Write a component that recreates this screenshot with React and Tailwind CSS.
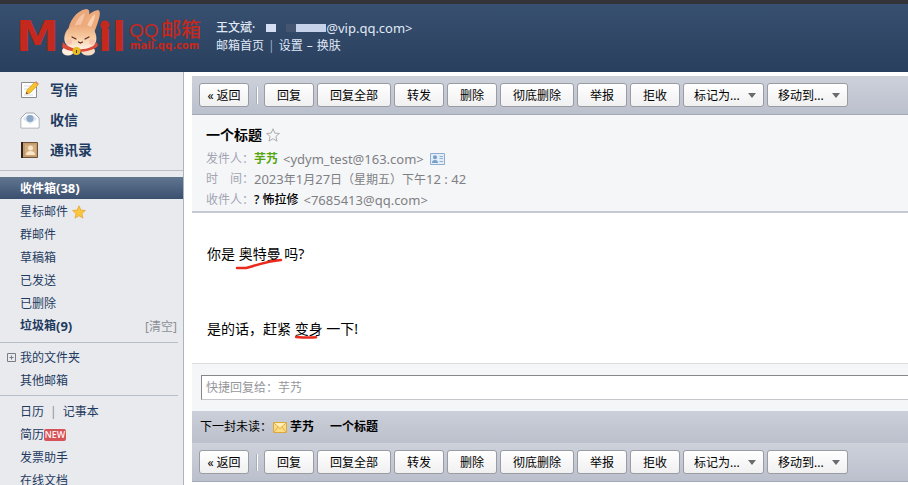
import React from "react";

const buttonBase =
  "h-6 shrink-0 rounded-[3px] border border-[#9a9ca3] bg-linear-to-b from-white to-[#f0f0f1] text-xs text-black";

function ToolButton({ children, wide }) {
  return (
    <button type="button" className={`${buttonBase} pt-[2px] ${wide ? "w-[74px]" : "w-[50px]"}`}>
      {children}
    </button>
  );
}

function ToolSelect({ label }) {
  return (
    <div className="relative flex shrink-0">
      <select aria-label={label} className={`${buttonBase} w-[81px] appearance-none pl-[10px] pt-px`}>
        <option>{label}</option>
      </select>
      <svg viewBox="0 0 8 5" className="pointer-events-none absolute right-2 top-[10px] h-[5px] w-2" aria-hidden="true">
        <path d="M0 0h8L4 5z" fill="#6b6b6e" />
      </svg>
    </div>
  );
}

function Toolbar() {
  return (
    <div
      role="toolbar"
      className="flex h-[39px] shrink-0 items-center gap-[3px] overflow-hidden border-b border-[#a3a8b6] bg-linear-to-b from-[#cdd1da] to-[#bbc0cd] pl-[7px]"
    >
      <ToolButton>« 返回</ToolButton>
      <span className="ml-1 mr-[3px] h-[17px] w-[2px] border-l border-[#a9aebb] bg-white" />
      <ToolButton>回复</ToolButton>
      <ToolButton wide>回复全部</ToolButton>
      <ToolButton>转发</ToolButton>
      <ToolButton>删除</ToolButton>
      <ToolButton wide>彻底删除</ToolButton>
      <ToolButton>举报</ToolButton>
      <ToolButton>拒收</ToolButton>
      <ToolSelect label="标记为..." />
      <ToolSelect label="移动到..." />
    </div>
  );
}

function Logo() {
  return (
    <svg viewBox="0 0 190 56" className="h-14 w-[190px] shrink-0" role="img" aria-label="QQ邮箱">
      <defs>
        <linearGradient id="fur" x1="0" y1="0" x2="0" y2="1">
          <stop offset="0" stopColor="#eba878" />
          <stop offset="0.5" stopColor="#f7c9a0" />
          <stop offset="1" stopColor="#fff3e4" />
        </linearGradient>
      </defs>
      <g fill="#c5281c" fontWeight="700">
        <text x="-2" y="47" fontSize="43" fontFamily="DejaVu Sans, sans-serif">M</text>
        <text x="80" y="47" fontSize="41" fontFamily="DejaVu Sans, sans-serif">ı</text>
        <circle cx="87" cy="21" r="4.500" />
        <text x="94" y="47" fontSize="41" fontFamily="DejaVu Sans, sans-serif">l</text>
        <text x="111" y="33" fontSize="19" fontWeight="500" fontFamily="Liberation Sans, sans-serif">QQ</text>
        <text x="143" y="33" fontSize="20" fontWeight="500" fontFamily="Noto Sans CJK SC, sans-serif">邮箱</text>
        <text x="112" y="45" fontSize="10" fontFamily="DejaVu Sans, sans-serif">mail.qq.com</text>
      </g>
      <path d="M50 28C51 17 58 7 68 5c5 0 4 6 0 13l-3 9z" fill="#e9a77a" />
      <path d="M56 24c2-7 6-13 11-15-1 6-4 10-5 15z" fill="#f4c4a4" />
      <path d="M62 27c2-10 8-19 18-21 4 1 1 10-4 23z" fill="#eeab7c" />
      <path d="M68 25c2-7 5-12 9-15 0 6-3 10-5 15z" fill="#f9d2b4" />
      <ellipse cx="50" cy="47" rx="6" ry="4.500" fill="#fff0e0" />
      <ellipse cx="70" cy="47" rx="7" ry="4.500" fill="#f9dcc4" />
      <path d="M45 38c6 8 26 9 34 0l1 4c-7 7-28 8-36 1z" fill="#dc4b3a" />
      <path d="M49 26c4-6 23-8 27 0 4 7 3 15-3 17-7 3-14 3-21 0-7-3-7-11-3-17z" fill="url(#fur)" />
      <path d="M54 33l4 2m9 0l4-2M60.500 38l2 1 2-1" stroke="#5a2b1c" strokeWidth="1.200" fill="none" strokeLinecap="round" />
      <circle cx="51" cy="38" r="3" fill="#f5b09a" opacity=".5" />
      <circle cx="74" cy="38" r="3" fill="#f5b09a" opacity=".5" />
      <circle cx="58.500" cy="47" r="4" fill="#e6bd20" />
      <path d="M58.500 46v3" stroke="#5a3b10" />
    </svg>
  );
}

function Header() {
  return (
    <header className="flex h-[72px] shrink-0 gap-2 border-t-4 border-[#333338] bg-linear-to-b from-[#385070] to-[#293f5e] pl-[18px] text-[#e0e9f6]">
      <Logo />
      <div className="pt-[15px] text-xs leading-[18px]">
        <div className="flex items-center">
          <b className="font-medium">王文斌·</b>
          <span className="ml-[11px] h-2 w-[10px] bg-[#d3def2]" />
          <span className="ml-[10px] h-2 w-[10px] bg-[#435571]" />
          <span className="h-2 w-[30px] bg-[#c6d2e9]" />
          <span className="text-[13px]">@vip.qq.com&gt;</span>
        </div>
        <nav>
          <a href="#home">邮箱首页</a>
          <span className="px-1 text-[#9dacc2]">|</span>
          <a href="#settings">设置</a>
          <span className="px-1">–</span>
          <a href="#skin">换肤</a>
        </nav>
      </div>
    </header>
  );
}

function WriteIcon() {
  return (
    <svg viewBox="0 0 20 20" className="size-5" aria-hidden="true">
      <path d="M1.500 2.500h15v15h-15z" fill="#fff" stroke="#8d8d8d" />
      <path d="M4 6h7M4 9h4M4 15h9" stroke="#dadada" />
      <path d="M6 14l1-4 8-8 3 3-8 8z" fill="#f6c32f" stroke="#d79b1c" strokeWidth=".7" />
      <path d="M15 2l1-1 3 3-1 1z" fill="#e2896f" />
      <path d="M6 14l.6-2 1.500 1.400z" fill="#4a3a20" />
    </svg>
  );
}

function InboxIcon() {
  return (
    <svg viewBox="0 0 20 20" className="size-5" aria-hidden="true">
      <path d="M1 8l5-5h8l5 5v10H1z" fill="#fbfcfd" stroke="#a3a8b0" />
      <path d="M3 9l4-4h6l4 4-7 5z" fill="#dbe4ee" />
      <circle cx="10" cy="8.500" r="3.500" fill="#8da8c6" />
      <path d="M1.500 9l8.500 6 8.500-6v8.500h-17z" fill="#fff" opacity=".85" />
    </svg>
  );
}

function ContactsIcon() {
  return (
    <svg viewBox="0 0 20 20" className="size-5" aria-hidden="true">
      <path d="M1.500 2.500h16v15h-16z" fill="#c19a6d" stroke="#6f5236" />
      <path d="M1 2h2v16H1z" fill="#33241a" />
      <path d="M5 4.500h11v11H5z" fill="#d3ae82" />
      <circle cx="10.500" cy="8" r="2.500" fill="#fbe6c8" />
      <path d="M6 15c0-3 2-4 4.500-4s4.500 1 4.500 4z" fill="#fbe6c8" />
    </svg>
  );
}

function StarIcon({ className, fill, stroke }) {
  return (
    <svg viewBox="0 0 14 14" className={className} aria-hidden="true">
      <path d="M7 .8l1.800 4.300 4.600.4-3.500 3 1.100 4.600L7 10.700l-4 2.400 1.100-4.600-3.500-3 4.600-.4z" fill={fill} stroke={stroke} strokeWidth=".9" />
    </svg>
  );
}

function Sidebar() {
  const row = "flex h-[23px] shrink-0 items-center pl-5";
  return (
    <aside className="flex w-[184px] shrink-0 flex-col overflow-hidden border-r border-[#a9b3c2] bg-[#e8eaee] text-xs text-[#1f3a5f]">
      <nav className="flex flex-col pt-[3px] text-sm font-bold">
        <a href="#compose" className="flex h-[30px] items-center gap-[10px] pl-5"><WriteIcon />写信</a>
        <a href="#receive" className="flex h-[30px] items-center gap-[10px] pl-5"><InboxIcon />收信</a>
        <a href="#contacts" className="flex h-[30px] items-center gap-[10px] pl-5"><ContactsIcon />通讯录</a>
      </nav>
      <nav className="mt-[5px] flex flex-col border-t border-[#b9bfca] pt-[6px]">
        <a href="#inbox" className="flex h-[22px] items-center bg-linear-to-b from-[#61768f] to-[#3b5070] pl-5 pt-px font-bold text-white">收件箱<span className="text-[13px]">(38)</span></a>
        <div className="flex flex-col pt-px">
          <a href="#starred" className={row}>星标邮件<StarIcon className="ml-1 size-[14px]" fill="#fbc83c" stroke="#e9a83c" /></a>
          <a href="#group" className={row}>群邮件</a>
          <a href="#drafts" className={row}>草稿箱</a>
          <a href="#sent" className={row}>已发送</a>
          <a href="#deleted" className={row}>已删除</a>
          <div className={`${row} justify-between pr-[6px]`}>
            <a href="#junk" className="flex items-center font-bold">垃圾箱<span className="text-[13px]">(9)</span></a>
            <a href="#empty" className="text-[#8c8f95]">[清空]</a>
          </div>
        </div>
      </nav>
      <nav className="mr-[5px] mt-1 flex flex-col border-t border-[#b9bfca] pt-[3px]">
        <a href="#folders" className="flex h-[23px] items-center gap-1 pl-[7px]">
          <svg viewBox="0 0 9 9" className="size-[9px]" aria-hidden="true">
            <path d="M.5.5h8v8h-8zM2.500 4.500h4M4.500 2.500v4" fill="none" stroke="#777d86" />
          </svg>
          我的文件夹
        </a>
        <a href="#others" className={row}>其他邮箱</a>
      </nav>
      <nav className="mr-[5px] mt-[3px] flex flex-col border-t border-[#b9bfca] pt-1">
        <div className={row}>
          <a href="#calendar">日历</a>
          <span className="px-[6px] text-[#8c8f95]">|</span>
          <a href="#notes">记事本</a>
        </div>
        <a href="#resume" className={row}>
          简历
          <span className="flex h-3 w-[22px] items-center justify-center rounded-[2px] bg-[#d65356] text-[9px] font-medium text-white">NEW</span>
        </a>
        <a href="#invoice" className={row}>发票助手</a>
        <a href="#docs" className={row}>在线文档</a>
      </nav>
    </aside>
  );
}

function Digits({ children }) {
  return <span className="text-[13px]">{children}</span>;
}

function MessageInfo() {
  return (
    <section className="h-[98px] shrink-0 border-b-2 border-[#c6c8d2] bg-[#f5f6f8] pl-[14px] pt-[10px] text-xs text-[#7f8084]">
      <h1 className="flex h-5 items-center gap-1 text-sm font-bold text-black">
        一个标题
        <StarIcon className="size-[14px]" fill="none" stroke="#a4a4a8" />
      </h1>
      <dl className="mt-1 grid grid-cols-[48px_auto] leading-5">
        <dt className="whitespace-nowrap text-[#a2a4b2]">发件人：</dt>
        <dd className="flex items-center">
          <b className="text-[#54a50e]">芋艿</b>
          <span className="ml-[5px] text-[13px]">&lt;ydym_test@163.com&gt;</span>
          <svg viewBox="0 0 15 12" className="ml-[6px] h-3 w-[15px]" aria-hidden="true">
            <path d="M.5.500h14v11H.5z" fill="#e2edf8" stroke="#8eafd3" />
            <circle cx="5" cy="4.300" r="2" fill="#769fca" />
            <path d="M2 10c0-2 1-3 3-3s3 1 3 3z" fill="#769fca" />
            <path d="M9.500 3.500h3.500M9.500 5.500h3.500M9.500 8.500h3.500" stroke="#91b2d5" />
          </svg>
        </dd>
        <dt className="whitespace-nowrap text-[#a2a4b2]">时　间：</dt>
        <dd>
          <Digits>2023</Digits>年<Digits>1</Digits>月<Digits>27</Digits>日（星期五）下午<Digits>12 : 42</Digits>
        </dd>
        <dt className="whitespace-nowrap text-[#a2a4b2]">收件人：</dt>
        <dd className="flex">
          <b className="font-medium text-black">? 怖拉修</b>
          <span className="ml-[5px] text-[13px]">&lt;7685413@qq.com&gt;</span>
        </dd>
      </dl>
    </section>
  );
}

function MessageBody() {
  return (
    <article className="h-[150px] shrink-0 bg-white pl-[15px] pt-7 text-sm leading-[25px] text-black">
      <p>
        你是{" "}
        <span className="relative">
          奥特曼
          <svg viewBox="0 0 48 12" className="pointer-events-none absolute -left-1 top-[14px] h-3 w-12" aria-hidden="true">
            <path d="M2 10h9C22 7 33 3 46 2" fill="none" stroke="#e92a1c" strokeWidth="2.500" strokeLinecap="round" />
          </svg>
        </span>{" "}
        吗?
      </p>
      <p className="mt-[50px]">
        是的话，赶紧{" "}
        <span className="relative">
          变身
          <svg viewBox="0 0 24 4" className="pointer-events-none absolute left-0 top-4 h-1 w-6" aria-hidden="true">
            <path d="M1 2c6 .5 12 1 20 .300" fill="none" stroke="#e92a1c" strokeWidth="2.500" strokeLinecap="round" />
          </svg>
        </span>{" "}
        一下!
      </p>
    </article>
  );
}

function NextUnread() {
  return (
    <div className="flex h-8 shrink-0 items-center bg-linear-to-b from-[#cbcfd9] to-[#bbc0cc] pl-2 text-xs text-black">
      <span className="w-[73px] whitespace-nowrap">下一封未读：</span>
      <svg viewBox="0 0 14 11" className="mr-[3px] h-[11px] w-[14px]" aria-hidden="true">
        <path d="M.5.500h13v10H.5z" fill="#fbdc82" stroke="#dda83c" />
        <path d="M1 1l6 5.500L13 1M1 10l4-5M13 10L9 5" fill="none" stroke="#e3ae45" />
        <path d="M1.500 1h11L7 5.500z" fill="#fff0b9" />
      </svg>
      <a href="#next" className="flex gap-4 font-bold"><span>芋艿</span><span>一个标题</span></a>
    </div>
  );
}

export default function App() {
  return (
    <div className="flex h-screen flex-col overflow-hidden bg-white font-['Noto_Sans','Noto_Sans_CJK_SC',sans-serif]">
      <Header />
      <div className="flex min-h-0 flex-1">
        <Sidebar />
        <main className="flex min-w-0 flex-1 flex-col overflow-hidden pl-2 pt-1">
          <Toolbar />
          <MessageInfo />
          <MessageBody />
          <div className="flex h-12 shrink-0 items-center border-t border-[#dcdde0] bg-[#f5f6f8] pl-[9px]">
            <input
              aria-label="快捷回复"
              placeholder="快捷回复给：芋艿"
              className="h-[25px] w-full border border-r-0 border-[#c4c6c9] border-t-[#85878b] border-l-[#85878b] bg-white px-1 text-xs placeholder:text-[#96979b]"
            />
          </div>
          <NextUnread />
          <Toolbar />
        </main>
      </div>
    </div>
  );
}
